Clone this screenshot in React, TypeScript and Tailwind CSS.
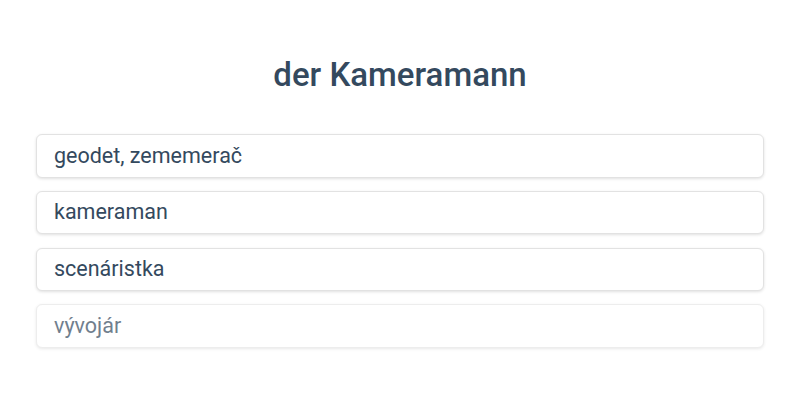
const OPTIONS = [
  { label: "geodet, zememerač", faded: false },
  { label: "kameraman", faded: false },
  { label: "scenáristka", faded: false },
  { label: "vývojár", faded: true },
];

export default function App() {
  return (
    <div
      className="min-h-[400px] bg-white"
      style={{ fontFamily: "Roboto, 'Noto Sans', sans-serif" }}
    >
      <div className="mx-auto max-w-3xl px-5 pt-[56px]">
        <h1 className="text-center text-[33px] font-medium leading-[38px] text-[#34495e]">
          der Kameramann
        </h1>
        <ul className="mt-[40px] flex flex-col gap-[13.3px]">
          {OPTIONS.map(({ label, faded }) => (
            <li
              key={label}
              className={
                faded
                  ? "flex h-[43.5px] items-center rounded-md border border-[#e6e6e6] bg-white px-[17px] text-[21.5px] text-[#34495e] opacity-70 shadow-[0_1px_3px_rgba(0,0,0,0.12)]"
                  : "flex h-[43.5px] items-center rounded-md border border-[#e2e2e2] bg-white px-[17px] text-[21.5px] text-[#34495e] shadow-[0_1px_3px_rgba(0,0,0,0.12)]"
              }
            >
              {label}
            </li>
          ))}
        </ul>
      </div>
    </div>
  );
}
